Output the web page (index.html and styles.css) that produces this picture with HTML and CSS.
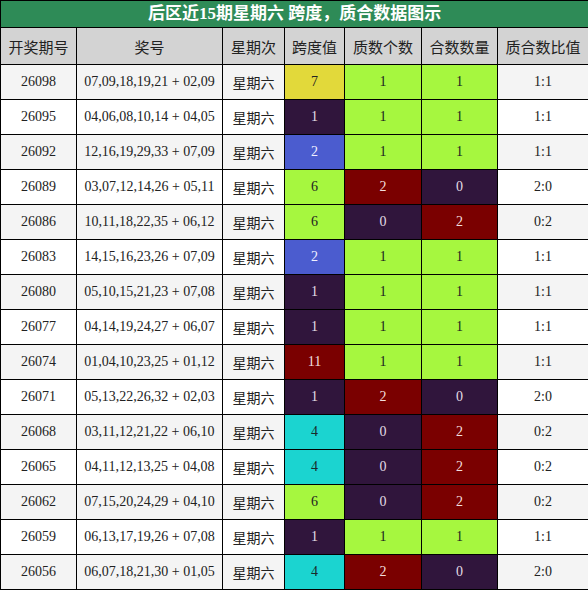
FILE: index.html
```html
<!DOCTYPE html>
<html lang="zh">
<head>
    <meta charset="UTF-8">
    <title>后区近15期星期六 跨度，质合数据图示</title>
    <link rel="stylesheet" href="styles.css">
</head>
<body>
    <table class="chart">
        <colgroup>
            <col style="width:76px">
            <col style="width:146px">
            <col style="width:62px">
            <col style="width:60px">
            <col style="width:77px">
            <col style="width:76px">
            <col style="width:91px">
        </colgroup>
        <thead>
            <tr class="title-row"><th colspan="7">后区近15期星期六 跨度，质合数据图示</th></tr>
            <tr class="head-row">
                <th>开奖期号</th><th>奖号</th><th>星期次</th><th>跨度值</th><th>质数个数</th><th>合数数量</th><th>质合数比值</th>
            </tr>
        </thead>
        <tbody>
            <tr><td>26098</td><td>07,09,18,19,21 + 02,09</td><td class="cjk">星期六</td><td class="yellow">7</td><td class="lime">1</td><td class="lime">1</td><td>1:1</td></tr>
            <tr><td>26095</td><td>04,06,08,10,14 + 04,05</td><td class="cjk">星期六</td><td class="purple">1</td><td class="lime">1</td><td class="lime">1</td><td>1:1</td></tr>
            <tr><td>26092</td><td>12,16,19,29,33 + 07,09</td><td class="cjk">星期六</td><td class="blue">2</td><td class="lime">1</td><td class="lime">1</td><td>1:1</td></tr>
            <tr><td>26089</td><td>03,07,12,14,26 + 05,11</td><td class="cjk">星期六</td><td class="lime">6</td><td class="red">2</td><td class="purple">0</td><td>2:0</td></tr>
            <tr><td>26086</td><td>10,11,18,22,35 + 06,12</td><td class="cjk">星期六</td><td class="lime">6</td><td class="purple">0</td><td class="red">2</td><td>0:2</td></tr>
            <tr><td>26083</td><td>14,15,16,23,26 + 07,09</td><td class="cjk">星期六</td><td class="blue">2</td><td class="lime">1</td><td class="lime">1</td><td>1:1</td></tr>
            <tr><td>26080</td><td>05,10,15,21,23 + 07,08</td><td class="cjk">星期六</td><td class="purple">1</td><td class="lime">1</td><td class="lime">1</td><td>1:1</td></tr>
            <tr><td>26077</td><td>04,14,19,24,27 + 06,07</td><td class="cjk">星期六</td><td class="purple">1</td><td class="lime">1</td><td class="lime">1</td><td>1:1</td></tr>
            <tr><td>26074</td><td>01,04,10,23,25 + 01,12</td><td class="cjk">星期六</td><td class="red">11</td><td class="lime">1</td><td class="lime">1</td><td>1:1</td></tr>
            <tr><td>26071</td><td>05,13,22,26,32 + 02,03</td><td class="cjk">星期六</td><td class="purple">1</td><td class="red">2</td><td class="purple">0</td><td>2:0</td></tr>
            <tr><td>26068</td><td>03,11,12,21,22 + 06,10</td><td class="cjk">星期六</td><td class="cyan">4</td><td class="purple">0</td><td class="red">2</td><td>0:2</td></tr>
            <tr><td>26065</td><td>04,11,12,13,25 + 04,08</td><td class="cjk">星期六</td><td class="cyan">4</td><td class="purple">0</td><td class="red">2</td><td>0:2</td></tr>
            <tr><td>26062</td><td>07,15,20,24,29 + 04,10</td><td class="cjk">星期六</td><td class="lime">6</td><td class="purple">0</td><td class="red">2</td><td>0:2</td></tr>
            <tr><td>26059</td><td>06,13,17,19,26 + 07,08</td><td class="cjk">星期六</td><td class="purple">1</td><td class="lime">1</td><td class="lime">1</td><td>1:1</td></tr>
            <tr><td>26056</td><td>06,07,18,21,30 + 01,05</td><td class="cjk">星期六</td><td class="cyan">4</td><td class="red">2</td><td class="purple">0</td><td>2:0</td></tr>
        </tbody>
    </table>
</body>
</html>
```

FILE: styles.css
```css
body {
    margin: 0;
    padding: 0;
    background-color: #ffffff;
    font-family: "Liberation Serif", "Noto Sans CJK SC", serif;
}
.chart {
    width: 588px;
    table-layout: fixed;
    border-collapse: collapse;
    border: 1px solid #000;
}
.chart th, .chart td {
    border: 1px solid #000;
    text-align: center;
    padding: 0;
    color: #222;
}
.title-row th {
    height: 26px;
    background-color: #2e8b57;
    color: #ffffff;
    font-size: 17px;
    font-weight: bold;
    line-height: 20px;
}
.head-row th {
    height: 36px;
    background-color: #d3d3d3;
    font-family: "Noto Sans CJK SC", sans-serif;
    font-weight: normal;
    font-size: 15px;
    color: #222;
}
.chart td {
    height: 34px;
    font-size: 14px;
}
.chart tbody tr:nth-child(odd) {
    background-color: #f4f4f4;
}
.chart tbody tr:nth-child(even) {
    background-color: #ffffff;
}
.chart td.cjk {
    font-family: "Noto Sans CJK SC", sans-serif;
    font-size: 14px;
}
.chart td.yellow { background-color: #e2d93a; }
.chart td.lime { background-color: #a6f73f; }
.chart td.purple { background-color: #30153c; color: #e4dde6; }
.chart td.blue { background-color: #4b5ccf; color: #f0f0ff; }
.chart td.red { background-color: #7a0000; color: #f2dede; }
.chart td.cyan { background-color: #1bd4d0; color: #1a2a2a; }
```
